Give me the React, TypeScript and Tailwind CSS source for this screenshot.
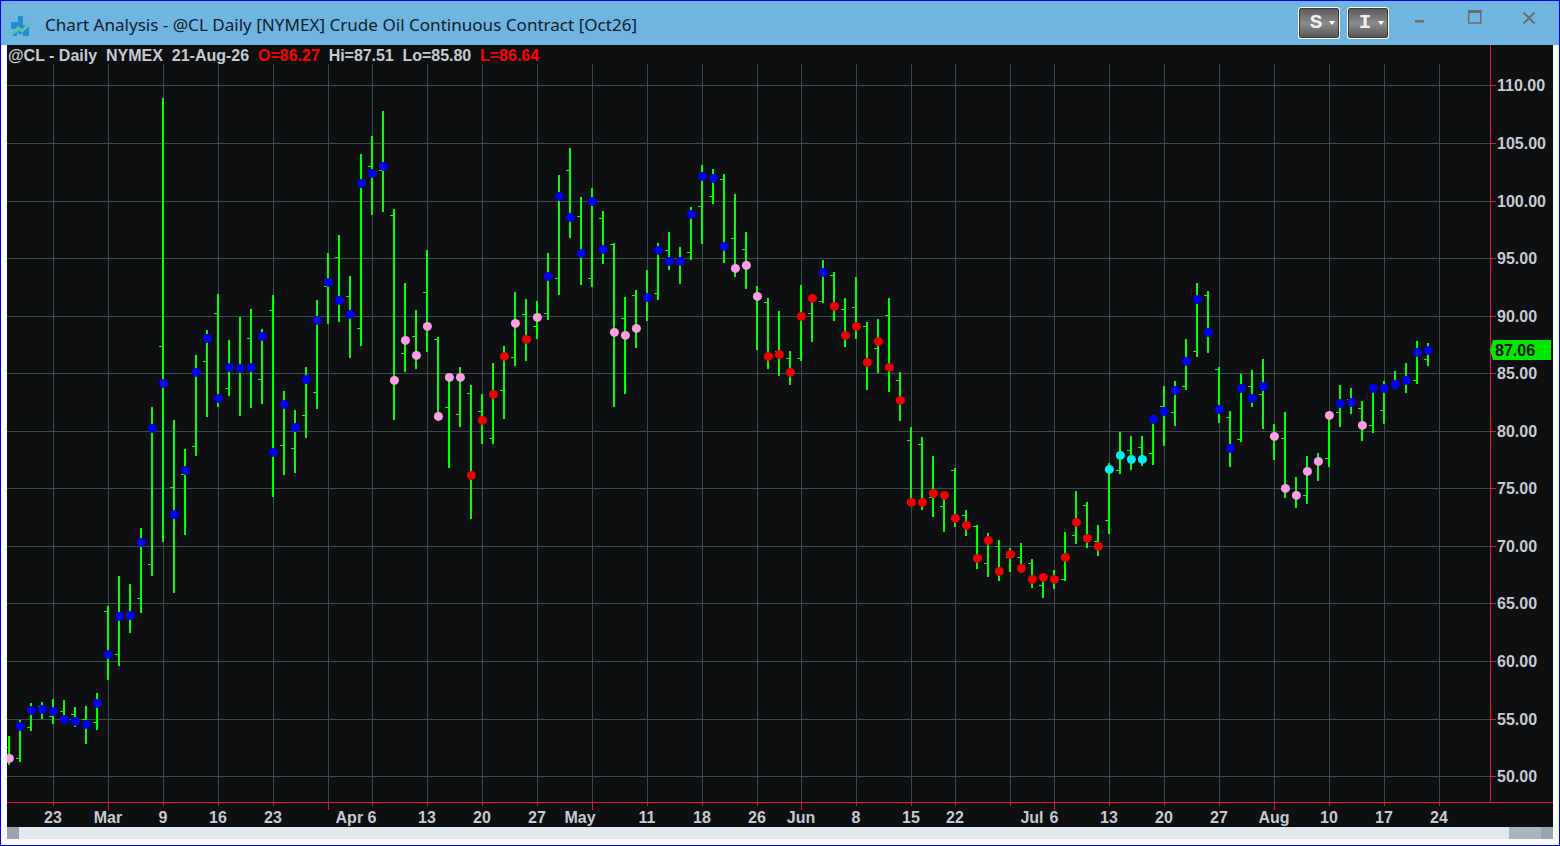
const P = "#ff9ee8", B = "#0000f0", R = "#f00000", C = "#00f0f0";

// [high y, low y, open tick y, dot y, dot colour]; bars are 11px apart starting at x = 9
const bars: [number, number, number, number, string][] = [
  [736,765,747,758,P],[720,762,758,726,B],[703,731,727,710,B],[702,719,706,709,B],[699,724,716,711,B],
  [700,723,711,719,B],[707,727,714,721,B],[706,744,719,724,B],[693,730,722,703,B],[606,680,611,654,B],
  [576,666,654,616,B],[584,633,615,615,B],[528,613,598,542,B],[407,576,564,428,B],[98,542,346,383,B],
  [420,593,487,514,B],[449,535,474,470,B],[355,456,446,372,B],[330,417,361,338,B],[294,407,313,398,B],
  [340,396,388,367,B],[317,416,368,368,B],[309,408,338,367,B],[329,404,379,336,B],[295,497,310,452,B],
  [391,475,445,404,B],[410,473,448,427,B],[367,438,415,379,B],[300,409,392,320,B],[253,324,286,282,B],
  [235,322,257,300,B],[276,358,296,314,B],[154,346,328,183,B],[136,215,166,173,B],[111,212,170,166,B],
  [209,420,215,380,P],[283,372,353,340,P],[310,369,336,355,P],[250,352,292,326,P],[337,416,339,416,P],
  [377,468,407,377,P],[367,427,414,377,P],[385,519,393,475,R],[394,444,411,420,R],[363,444,438,394,R],
  [346,419,390,356,R],[292,366,357,323,P],[299,361,314,339,R],[301,339,326,317,P],[253,320,313,276,B],
  [175,295,278,196,B],[148,238,170,217,B],[197,285,216,253,B],[188,287,278,201,B],[211,264,218,249,B],
  [243,407,244,332,P],[297,394,318,335,P],[290,348,295,328,P],[270,321,297,297,B],[243,300,293,250,B],
  [232,270,250,261,B],[247,284,261,261,B],[207,260,252,214,B],[165,244,206,176,B],[169,204,196,178,B],
  [174,263,179,246,B],[194,277,238,268,P],[232,289,249,265,P],[286,350,296,296,P],[298,369,302,356,R],
  [311,376,351,354,R],[351,385,358,372,R],[285,361,358,316,R],[294,342,313,298,R],[260,303,301,272,B],
  [272,321,275,306,R],[298,347,309,335,R],[277,339,307,326,R],[322,390,326,362,R],[319,373,348,341,R],
  [298,392,315,367,R],[372,421,380,400,R],[427,502,440,502,R],[437,510,444,502,R],[456,517,497,493,R],
  [495,532,506,495,R],[468,527,470,518,R],[510,536,515,525,R],[525,569,526,558,R],[533,577,563,540,R],
  [540,581,546,571,R],[548,572,557,554,R],[543,573,557,568,R],[559,588,563,579,R],[577,598,585,577,R],
  [570,589,580,579,R],[532,581,579,557,R],[491,544,535,522,R],[502,548,505,538,R],[525,556,541,546,R],
  [463,534,520,469,C],[432,474,470,455,C],[436,470,450,459,C],[436,466,447,459,C],[415,465,453,419,B],
  [386,446,406,411,B],[381,426,412,390,B],[339,390,386,361,B],[283,357,351,299,B],[291,353,295,332,B],
  [367,423,369,409,B],[411,467,417,448,B],[374,442,439,388,B],[370,407,386,398,B],[359,429,394,386,B],
  [424,460,436,436,P],[412,498,438,488,P],[477,508,495,495,P],[456,504,495,471,P],[453,481,461,461,P],
  [415,467,458,415,P],[385,427,412,403,B],[388,414,399,402,B],[401,441,408,425,P],[388,433,425,388,B],
  [381,424,410,388,B],[371,389,384,384,B],[363,393,380,380,B],[341,384,380,352,B],[343,366,359,350,B],
];

const prices: [string, number][] = [
  ["110.00",85],["105.00",143],["100.00",201],["95.00",258],["90.00",316],["85.00",373],["80.00",431],
  ["75.00",488],["70.00",546],["65.00",603],["60.00",661],["55.00",719],["50.00",776],
];

const gridX = [53,108,163,218,273,328,372,427,482,537,592,647,702,757,801,856,911,955,1010,1054,1109,1164,1219,1274,1329,1384,1439];
const monthX = [108,328,592,801,1054,1274];

const dates: [string, number][] = [
  ["23",53],["Mar",108],["9",163],["16",218],["23",273],["Apr 6",356],["13",427],["20",482],["27",537],["May",580],
  ["11",647],["18",702],["26",757],["Jun",801],["8",856],["15",911],["22",955],["Jul",1032],["6",1054],["13",1109],
  ["20",1164],["27",1219],["Aug",1274],["10",1329],["17",1384],["24",1439],
];

const GRID = "#344e4e";
const RED = "#e8103c";
const LABEL = "#c6cad2";

function Logo() {
  return (
    <svg width="22" height="26" viewBox="0 0 22 26" className="shrink-0">
      <rect x="1" y="8" width="7" height="7" fill="#1f8fd0" />
      <rect x="8" y="2" width="5" height="18" fill="#1f8fd0" />
      <rect x="13" y="11" width="6" height="11" fill="#1f8fd0" />
      <rect x="3" y="18" width="4" height="4" fill="#1f8fd0" />
      <path d="M1 21 L8 14 L12 17 L21 8" fill="none" stroke="#5fc0b0" strokeWidth="3" />
    </svg>
  );
}

function ToolButton({ letter }: { letter: string }) {
  return (
    <div className="relative w-[42px] h-[32px] rounded-[3px] border border-white bg-white">
      <div className="w-full h-full rounded-[2px] border border-[#3c3c3c] bg-gradient-to-b from-[#5a5a5a] via-[#8c8c8c] to-[#585858] flex items-center">
        <span className="ml-[6px] w-[20px] text-center text-[#f0f0f0] text-[21px] font-bold leading-none font-['Liberation_Mono',monospace]">{letter}</span>
      </div>
      <svg width="6" height="4" viewBox="0 0 6 4" className="absolute right-[4px] top-[13px]">
        <path d="M0 0H6L3 4Z" fill="#ffffff" />
      </svg>
    </div>
  );
}

function WindowControls() {
  return (
    <div className="flex items-start ml-[25px] pt-[3px]">
      <svg width="12" height="4" viewBox="0 0 12 4" className="mt-[10px]">
        <rect x="1" y="0" width="9" height="2.5" fill="#6d6d6d" />
      </svg>
      <svg width="14" height="14" viewBox="0 0 14 14" className="ml-[42px]">
        <rect x="0.75" y="1" width="12" height="12" fill="none" stroke="#6d6d6d" strokeWidth="1.5" />
        <rect x="0" y="0" width="13.5" height="3" fill="#6d6d6d" />
      </svg>
      <svg width="14" height="14" viewBox="0 0 14 14" className="ml-[40px] mt-[1px]">
        <path d="M1.5 1.5 L12.5 12.5 M12.5 1.5 L1.5 12.5" stroke="#6d6d6d" strokeWidth="1.8" fill="none" />
      </svg>
    </div>
  );
}

function Chart() {
  return (
    <svg width="1546" height="782" viewBox="7 45 1546 782" className="block" shapeRendering="crispEdges" fontFamily="'Liberation Sans', Arial, sans-serif" fontWeight="700" fontSize="16">
      <rect x="7" y="45" width="1546" height="782" fill="#0d0f11" />
      {prices.map(([, y]) => (
        <rect key={y} x="7" y={y} width="1483" height="1" fill={GRID} />
      ))}
      {gridX.map((x) => (
        <rect key={x} x={x} y="64" width="1" height="738" fill={GRID} />
      ))}
      {bars.map(([hi, lo, tick], i) => {
        const x = 9 + i * 11;
        return (
          <g key={i} fill="#00ff00">
            <rect x={x - 1} y={hi} width="2" height={lo - hi} />
            <rect x={x - 4} y={tick} width="3" height="1" />
          </g>
        );
      })}
      {bars.map(([, , , dot, color], i) => (
        <circle key={i} cx={9.4 + i * 11} cy={dot + 0.4} r="4.5" fill={color} shapeRendering="geometricPrecision" />
      ))}
      <rect x="1490" y="45" width="1" height="757" fill={RED} />
      <rect x="7" y="802" width="1546" height="1" fill={RED} />
      {prices.map(([label, y]) => (
        <g key={label}>
          <rect x="1490" y={y} width="6" height="1" fill={RED} />
          <text x="1497" y={y + 6} fill={LABEL}>{label}</text>
        </g>
      ))}
      {gridX.map((x) => (
        <rect key={x} x={x} y="803" width="1" height={monthX.includes(x) ? 7 : 3} fill={RED} />
      ))}
      {dates.map(([label, x]) => (
        <text key={label + x} x={x} y="823" textAnchor="middle" fill={LABEL}>{label}</text>
      ))}
      <path d="M1490 350 L1493 340 H1551 V360 H1493 Z" fill="#00e800" shapeRendering="geometricPrecision" />
      <text x="1495" y="356" fill="#0a0f0a">87.06</text>
    </svg>
  );
}

export default function App() {
  return (
    <div className="w-[1560px] h-[846px] border border-[#0000f0] bg-[#f7f9fb] flex flex-col overflow-hidden font-['Liberation_Sans',Arial,sans-serif]">
      <div className="h-[44px] shrink-0 bg-[#6fb5e0] flex items-center">
        <div className="ml-[9px] mt-[8px]"><Logo /></div>
        <span className="ml-[13px] mt-[3px] text-[17.07px] text-[#14202c] font-['Noto_Sans',sans-serif] whitespace-nowrap">
          Chart Analysis - @CL Daily [NYMEX] Crude Oil Continuous Contract [Oct26]
        </span>
        <div className="ml-auto flex items-start mr-[23px] -mt-[1px]">
          <div className="flex gap-[7px]">
            <ToolButton letter="S" />
            <ToolButton letter="I" />
          </div>
          <WindowControls />
        </div>
      </div>
      <div className="flex-1 px-[6px] pb-[6px] flex flex-col">
        <div className="relative">
          <Chart />
          <div className="absolute left-[1px] top-[1px] flex text-[16px] font-bold leading-[19px] text-[#c6cad2] whitespace-pre">
            <span>@CL - Daily  NYMEX  21-Aug-26  </span>
            <span className="text-[#ff0000]">O=86.27</span>
            <span className="tracking-[-0.04px]">  Hi=87.51  Lo=85.80  </span>
            <span className="text-[#ff0000]">L=86.64</span>
          </div>
        </div>
        <div className="flex h-[12px] bg-[#e2e8f0]">
          <div className="w-[12px] bg-[#9aa3af]" />
          <div className="flex-1" />
          <div className="w-[32px] bg-[#abb5c0]" />
          <div className="w-[12px] bg-[#9aa3af]" />
        </div>
      </div>
    </div>
  );
}
